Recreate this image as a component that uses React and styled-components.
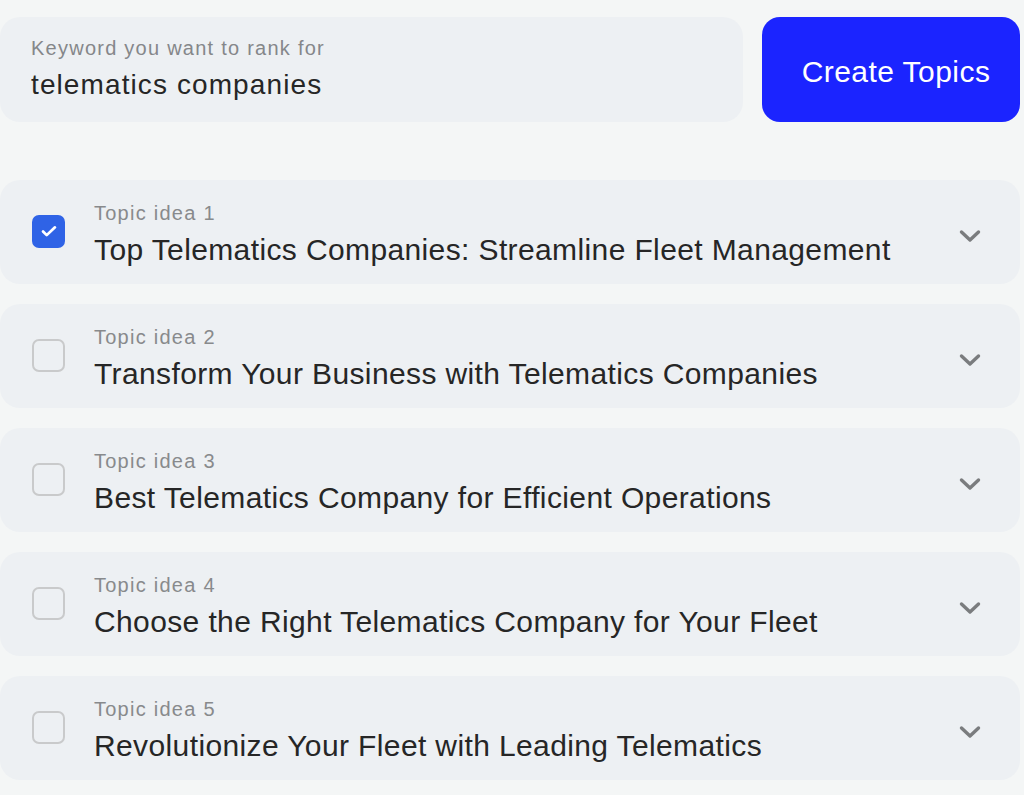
import React, { useState } from "react";
import styled, { createGlobalStyle } from "styled-components";

const GlobalStyle = createGlobalStyle`
	html, body {
		margin: 0;
		padding: 0;
		background: #f4f6f6;
		font-family: "Liberation Sans", Arial, sans-serif;
	}
`;

const Page = styled.div`
	width: 1024px;
	height: 795px;
	box-sizing: border-box;
	padding: 17px 4px 0 0;
	display: flex;
	flex-direction: column;
	gap: 58px;
	overflow: hidden;
`;

const TopBar = styled.div`
	display: flex;
	gap: 19px;
	height: 105px;
`;

const KeywordBox = styled.div`
	flex: 1;
	background: #edf0f3;
	border-radius: 20px;
	padding: 19px 31px 0;
	box-sizing: border-box;
	display: flex;
	flex-direction: column;
	.label {
		font-size: 20px;
		letter-spacing: 1.25px;
		color: #85878a;
		line-height: 24px;
	}
	.value {
		font-size: 28px;
		letter-spacing: 1.1px;
		color: #262626;
		line-height: 34px;
		margin-top: 8px;
	}
`;

const CreateButton = styled.button`
	width: 258px;
	border: none;
	border-radius: 18px;
	background: #1b24ff;
	color: #fff;
	font-family: inherit;
	font-size: 30px;
	letter-spacing: 0.45px;
	cursor: pointer;
	padding: 4px 0 0 10px;
`;

const List = styled.div`
	display: flex;
	flex-direction: column;
	gap: 20px;
`;

const Card = styled.div`
	height: 104px;
	background: #edf0f3;
	border-radius: 20px;
	display: flex;
	align-items: center;
	padding: 0 37px 0 32px;
	box-sizing: border-box;
`;

const Box = styled.div`
	width: 33px;
	height: 33px;
	box-sizing: border-box;
	border-radius: 7px;
	flex-shrink: 0;
	display: flex;
	align-items: center;
	justify-content: center;
	cursor: pointer;
	background: ${(p) => (p.checked ? "#2f63e6" : "transparent")};
	border: ${(p) => (p.checked ? "none" : "2px solid #c9cacb")};
	margin-top: -2px;
`;

const Texts = styled.div`
	flex: 1;
	margin-left: 29px;
	margin-top: 5px;
	display: flex;
	flex-direction: column;
	.idea {
		font-size: 20px;
		letter-spacing: 1.25px;
		color: #888a8c;
		line-height: 24px;
	}
	.title {
		font-size: 30px;
		letter-spacing: 0.38px;
		color: #262626;
		line-height: 36px;
		margin-top: 7px;
	}
`;

const Chevron = styled.svg`
	width: 26px;
	height: 26px;
	flex-shrink: 0;
	margin-top: 8px;
`;

const topics = [
	"Top Telematics Companies: Streamline Fleet Management",
	"Transform Your Business with Telematics Companies",
	"Best Telematics Company for Efficient Operations",
	"Choose the Right Telematics Company for Your Fleet",
	"Revolutionize Your Fleet with Leading Telematics",
];

export default function App() {
	const [checked, setChecked] = useState([0]);

	let toggle = (i) => {
		setChecked((prev) => (prev.includes(i) ? prev.filter((x) => x !== i) : [...prev, i]));
	};

	return (
		<>
			<GlobalStyle />
			<Page>
				<TopBar>
					<KeywordBox>
						<span className="label">Keyword you want to rank for</span>
						<span className="value">telematics companies</span>
					</KeywordBox>
					<CreateButton>Create Topics</CreateButton>
				</TopBar>
				<List>
					{topics.map((title, i) => {
						const on = checked.includes(i);
						return (
							<Card key={i}>
								<Box checked={on} onClick={() => toggle(i)}>
									{on && (
										<svg width="22" height="22" viewBox="0 0 24 24" fill="none">
											<path d="M5.5 12.5l4 4L18.5 8" stroke="#fff" strokeWidth="3" strokeLinecap="round" strokeLinejoin="round" />
										</svg>
									)}
								</Box>
								<Texts>
									<span className="idea">Topic idea {i + 1}</span>
									<span className="title">{title}</span>
								</Texts>
								<Chevron viewBox="0 0 26 26" fill="none">
									<path d="M4.5 9l8.5 8 8.5-8" stroke="#7a7c7e" strokeWidth="3.4" strokeLinecap="round" strokeLinejoin="round" />
								</Chevron>
							</Card>
						);
					})}
				</List>
			</Page>
		</>
	);
}
